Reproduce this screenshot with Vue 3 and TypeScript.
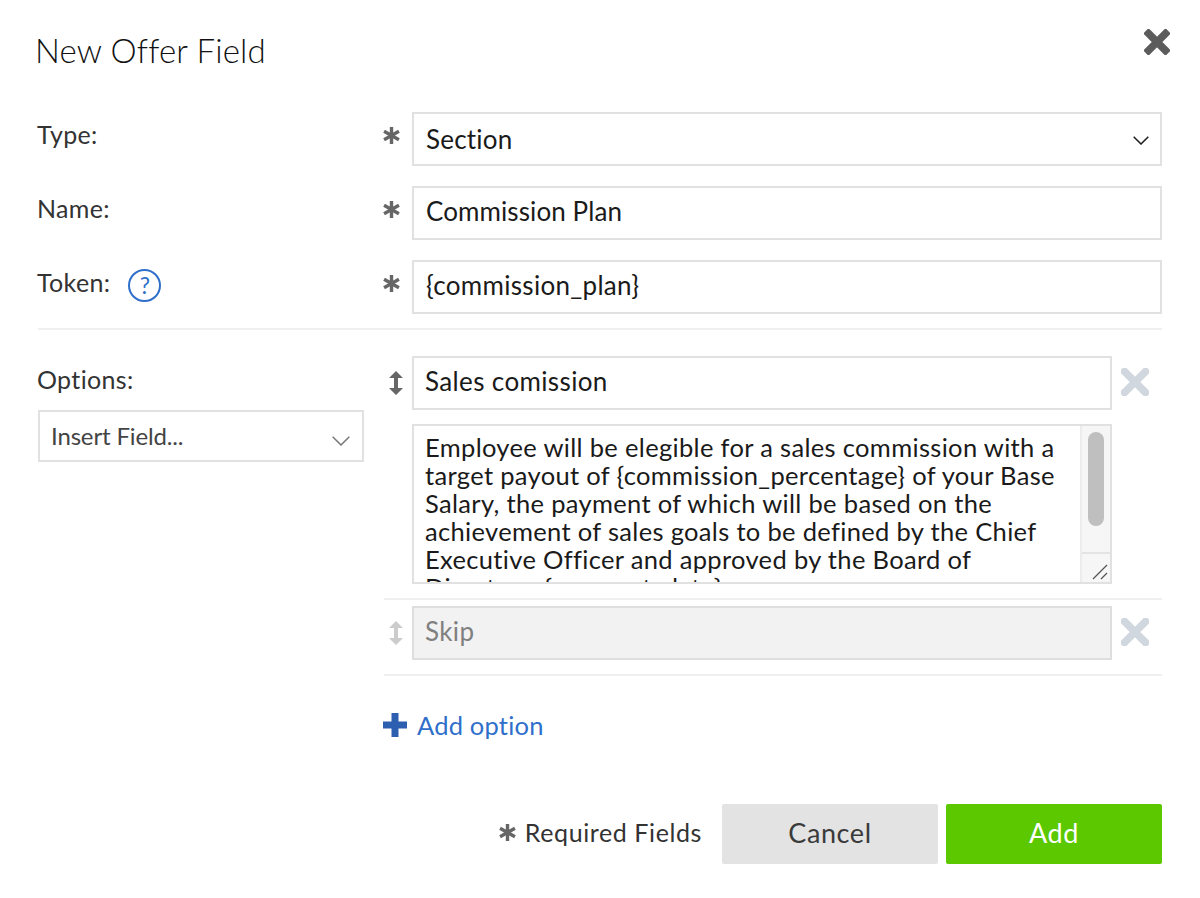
<script setup lang="ts">
const bodyLines: string[] = [
  'Employee will be elegible for a sales commission with a',
  'target payout of {commission_percentage} of your Base',
  'Salary, the payment of which will be based on the',
  'achievement of sales goals to be defined by the Chief',
  'Executive Officer and approved by the Board of',
  'Directors. {payment_date}',
]
</script>

<template>
  <div class="dialog">
    <header class="head">
      <h1 class="title">New Offer Field</h1>
      <svg class="close" viewBox="0 0 26 26"><path d="M4.5 4.5 21.5 21.5M21.5 4.5 4.5 21.5" /></svg>
    </header>

    <div class="row">
      <div class="label">Type:</div>
      <svg class="star" viewBox="0 0 16 16"><path d="M8 0v16M1 4l14 8M15 4 1 12" /></svg>
      <div class="box select">
        <span class="val-section">Section</span>
        <svg class="chev" viewBox="0 0 16 9"><path d="M.7.7 8 8 15.3.7" /></svg>
      </div>
    </div>
    <div class="row">
      <div class="label">Name:</div>
      <svg class="star" viewBox="0 0 16 16"><path d="M8 0v16M1 4l14 8M15 4 1 12" /></svg>
      <div class="box"><span class="val-name">Commission Plan</span></div>
    </div>
    <div class="row">
      <div class="label">Token:
        <span class="help">?</span>
      </div>
      <svg class="star" viewBox="0 0 16 16"><path d="M8 0v16M1 4l14 8M15 4 1 12" /></svg>
      <div class="box"><span>{commission_plan}</span></div>
    </div>

    <div class="rule top-rule"></div>

    <div class="options">
      <div class="opt-left">
        <div class="label opt-label">Options:</div>
        <div class="box insert">
          <span>Insert Field...</span>
          <svg class="chev light" viewBox="0 0 18 10"><path d="M.7.7 9 9 17.3.7" /></svg>
        </div>
      </div>

      <div class="opt-right">
        <div class="opt-row">
          <svg class="sort" viewBox="0 0 16 24"><path d="M8 0 15 7H10V17H15L8 24 1 17H6V7H1Z" /></svg>
          <div class="box opt-input"><span>Sales comission</span></div>
          <svg class="remove" viewBox="0 0 28 28"><path d="M3.5 3.5 24.5 24.5M24.5 3.5 3.5 24.5" /></svg>
        </div>
        <div class="area">
          <div class="area-text">
            <div v-for="line in bodyLines" :key="line" class="area-line">{{ line }}</div>
          </div>
          <div class="scroll">
            <div class="track"><div class="thumb"></div></div>
            <div class="corner">
              <svg viewBox="0 0 16 16"><path d="M1 15 15 1M9 15 15 9" /></svg>
            </div>
          </div>
        </div>
        <div class="rule r1"></div>
        <div class="opt-row">
          <svg class="sort dim" viewBox="0 0 16 24"><path d="M8 0 15 7H10V17H15L8 24 1 17H6V7H1Z" /></svg>
          <div class="box opt-input disabled"><span>Skip</span></div>
          <svg class="remove" viewBox="0 0 28 28"><path d="M3.5 3.5 24.5 24.5M24.5 3.5 3.5 24.5" /></svg>
        </div>
        <div class="rule r2"></div>
        <div class="add">
          <svg class="plus" viewBox="0 0 24 24"><path d="M8.5 0h7v8.5H24v7h-8.5V24h-7v-8.5H0v-7h8.5z" /></svg>
          <span>Add option</span>
        </div>
      </div>
    </div>

    <footer class="foot">
      <svg class="star small" viewBox="0 0 16 16"><path d="M8 0v16M1 4l14 8M15 4 1 12" /></svg>
      <span class="req">Required Fields</span>
      <div class="btn cancel"><span>Cancel</span></div>
      <div class="btn ok"><span>Add</span></div>
    </footer>
  </div>
</template>

<style>
html, body { margin: 0; background: #fff; }
</style>

<style scoped>
.dialog {
  box-sizing: border-box;
  width: 1200px;
  height: 898px;
  padding: 0 38px;
  background: #fff;
  font-family: Lato, "Open Sans", sans-serif;
  font-size: 26px;
  color: #222;
  overflow: hidden;
}
.head {
  height: 112px;
  position: relative;
}
.title {
  margin: 0 0 0 -3px;
  padding-top: 30px;
  font-size: 33px;
  line-height: 40px;
  font-weight: 300;
  color: #111;
  letter-spacing: .15px;
}
.close {
  position: absolute;
  right: -8px;
  top: 29px;
  width: 26px;
  height: 26px;
  fill: none;
  stroke: #5c5c5c;
  stroke-width: 7.5;
  stroke-linecap: square;
}
.row {
  display: flex;
  align-items: center;
  height: 54px;
  margin-bottom: 20px;
}
.label {
  width: 346px;
  display: flex;
  align-items: center;
  gap: 18px;
  font-size: 25px;
  color: #333;
  letter-spacing: .35px;
  margin: -10px 0 0 -1px;
  flex: none;
}
.star {
  width: 17px;
  height: 17px;
  margin: -8px 12px 0 0;
  fill: none;
  stroke: #666;
  stroke-width: 3.2;
  flex: none;
}
.box {
  box-sizing: border-box;
  flex: 1;
  height: 54px;
  border: 2px solid #e1e1e1;
  padding: 0 12px;
  display: flex;
  align-items: center;
  justify-content: space-between;
  color: #1a1a1a;
  letter-spacing: .3px;
  white-space: nowrap;
}
.box > span {
  margin-top: -4px;
}
.box > .val-section {
  margin-top: 0;
  letter-spacing: .2px;
}
.val-name {
  letter-spacing: .1px;
}
.chev {
  width: 16px;
  height: 9px;
  margin: 2px -1px 0 0;
  fill: none;
  stroke: #1c1c1c;
  stroke-width: 1.5;
}
.chev.light {
  width: 18px;
  height: 10px;
  margin: 10px 0 0;
  stroke: #777;
}
.help {
  box-sizing: border-box;
  width: 33px;
  height: 33px;
  border: 2px solid #2f6fca;
  border-radius: 50%;
  color: #2f6fca;
  font-size: 23px;
  line-height: 29px;
  text-align: center;
  letter-spacing: 0;
  margin-top: 6px;
}
.rule {
  height: 2px;
  background: #efefef;
}
.top-rule {
  margin-top: -6px;
}
.options {
  display: flex;
  margin-top: 26px;
}
.opt-left {
  width: 326px;
  flex: none;
  margin-right: 20px;
}
.opt-label {
  width: auto;
  margin: -2px 0 0 -1px;
  height: 50px;
}
.insert {
  flex: none;
  width: 326px;
  height: 52px;
  margin-top: 6px;
  padding-left: 11px;
  color: #444;
  font-size: 24px;
  letter-spacing: -.15px;
}
.insert > span {
  margin-top: -2px;
}
.opt-right {
  flex: 1;
  min-width: 0;
}
.opt-row {
  display: flex;
  align-items: center;
  height: 54px;
}
.sort {
  width: 16px;
  height: 24px;
  margin: 0 8px 0 4px;
  fill: #666;
  flex: none;
}
.sort.dim {
  fill: #ccc;
}
.opt-input {
  flex: none;
  width: 700px;
  padding-left: 11px;
  letter-spacing: .37px;
}
.opt-input.disabled {
  background: #f2f2f2;
  color: #808080;
  border-color: #dedede;
}
.remove {
  width: 28px;
  height: 28px;
  margin: -2px 0 0 9px;
  fill: none;
  stroke: #d1d7df;
  stroke-width: 7.5;
  stroke-linecap: square;
  flex: none;
}
.area {
  box-sizing: border-box;
  margin: 14px 0 0 28px;
  width: 700px;
  height: 160px;
  border: 2px solid #e1e1e1;
  position: relative;
  overflow: hidden;
  padding: 7px 11px 0;
}
.area-line {
  line-height: 28px;
  height: 28px;
  white-space: nowrap;
  font-size: 25.5px;
  letter-spacing: .33px;
  color: #1a1a1a;
}
.scroll {
  box-sizing: border-box;
  position: absolute;
  top: 0;
  right: 0;
  bottom: 0;
  width: 30px;
  background: #f6f6f6;
  border-left: 2px solid #ececec;
  display: flex;
  flex-direction: column;
}
.track {
  flex: 1;
  padding: 6px 6px 0 6px;
}
.thumb {
  width: 16px;
  height: 94px;
  border-radius: 8px;
  background: #bfbfbf;
}
.corner {
  height: 28px;
  border-top: 2px solid #e4e4e4;
  position: relative;
}
.corner svg {
  position: absolute;
  right: 2px;
  bottom: 2px;
  width: 16px;
  height: 16px;
  fill: none;
  stroke: #555;
  stroke-width: 1.3;
}
.r1 {
  margin-top: 14px;
  margin-bottom: 6px;
}
.r2 {
  margin-top: 14px;
}
.add {
  display: flex;
  align-items: center;
  gap: 10px;
  margin-top: 36px;
  height: 30px;
  color: #2f6fca;
  font-size: 25.5px;
  letter-spacing: .2px;
  margin-left: -1px;
}
.add span {
  margin-top: -4px;
}
.plus {
  width: 24px;
  height: 24px;
  fill: #2d5fb0;
  margin-top: -4px;
}
.foot {
  display: flex;
  align-items: center;
  justify-content: flex-end;
  margin-top: 62px;
  height: 60px;
}
.star.small {
  margin: -4px 9px 0 0;
}
.req {
  font-size: 25px;
  color: #333;
  letter-spacing: .6px;
  margin: -4px 20px 0 0;
}
.btn {
  width: 216px;
  height: 60px;
  display: flex;
  align-items: center;
  justify-content: center;
  border-radius: 2px;
  font-size: 27px;
  letter-spacing: .6px;
}
.btn span {
  margin-top: -4px;
}
.cancel {
  background: #e3e3e3;
  color: #3a3a3a;
  margin-right: 8px;
}
.ok {
  background: #5bc800;
  color: #fff;
}
</style>
